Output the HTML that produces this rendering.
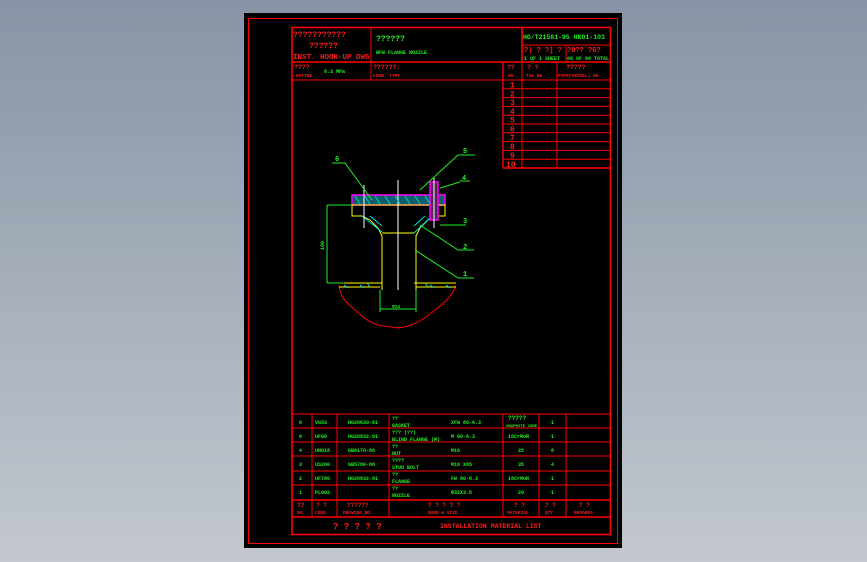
<!DOCTYPE html>
<html><head><style>
html,body{margin:0;padding:0;width:867px;height:562px;overflow:hidden;background:linear-gradient(#8794a5,#c3c8cf);}
svg{position:absolute;left:0;top:0}
text{font-family:"Liberation Mono",monospace;font-weight:bold}
.r{fill:#ff1a1a}.g{fill:#22ee22}
</style></head><body>
<svg width="867" height="562" viewBox="0 0 867 562">
<rect x="244" y="13" width="378" height="535" fill="#000"/>
<g stroke="#ff0000" fill="none" stroke-width="1">
<rect x="248.5" y="18.5" width="369" height="525"/>
<rect x="292" y="27.5" width="318.5" height="507" stroke-width="1.6"/>
<line x1="292" y1="62" x2="611" y2="62" stroke-width="1.6"/>
<line x1="292" y1="80" x2="611" y2="80"/>
<line x1="371" y1="27" x2="371" y2="80"/>
<line x1="522" y1="27" x2="522" y2="62" stroke-width="1.6"/>
<line x1="522" y1="45" x2="611" y2="45"/>
<line x1="566" y1="45" x2="566" y2="62"/>
<line x1="503" y1="62" x2="503" y2="168" stroke-width="1.4"/>
<line x1="522" y1="62" x2="522" y2="168"/>
<line x1="557" y1="62" x2="557" y2="168"/>
<line x1="503" y1="168" x2="611" y2="168" stroke-width="1.4"/>
<path d="M503 88.8H611M503 97.6H611M503 106.4H611M503 115.2H611M503 124H611M503 132.8H611M503 141.6H611M503 150.4H611M503 159.2H611"/>
<path d="M292 414H611M292 428H611M292 442H611M292 456H611M292 471H611M292 485H611"/>
<line x1="292" y1="500" x2="611" y2="500" stroke-width="1.6"/>
<line x1="292" y1="517" x2="611" y2="517" stroke-width="1.6"/>
<path d="M312 414V517M337 414V517M389 414V517M503 414V517M539 414V517M566 414V517"/>
</g>
<!-- header text -->
<text x="293" y="37" class="r" font-size="8">???????????</text>
<text x="309" y="48" class="r" font-size="8">??????</text>
<text x="293" y="59" class="r" font-size="7.5">INST. HOOK-UP DWG</text>
<text x="376" y="41" class="g" font-size="8">??????</text>
<text x="376" y="54" class="g" font-size="5">WFW FLANGE NOZZLE</text>
<text x="523" y="39" class="g" font-size="6.5">HG/T21581-95 HK01-103</text>
<text x="524" y="52" class="r" font-size="7">?| ? ?] ?</text>
<text x="524" y="60" class="g" font-size="5">1 OF 1 SHEET</text>
<text x="567" y="52" class="r" font-size="7">?9?? ?6?</text>
<text x="567" y="60" class="g" font-size="5">06 OF 98 TOTAL</text>
<text x="294" y="69" class="r" font-size="6.5">????</text>
<text x="296" y="77" class="r" font-size="4.5">RATING</text>
<text x="324" y="73" class="g" font-size="5">6.3 MPa</text>
<text x="373" y="69" class="r" font-size="6.5">??????:</text>
<text x="373" y="77" class="r" font-size="4.5">CONN. TYPE</text>
<text x="507" y="69" class="r" font-size="6.5">??</text>
<text x="508" y="77" class="r" font-size="4.5">NO.</text>
<text x="527" y="69" class="r" font-size="6.5">? ?</text>
<text x="526" y="77" class="r" font-size="4.5">TAG NO</text>
<text x="566" y="69" class="r" font-size="6.5">?????</text>
<text x="558" y="77" class="r" font-size="4.5">PIPE(VESSEL) NO.</text>
<g class="r" font-size="8">
<text x="510" y="87.5">1</text><text x="510" y="96.3">2</text><text x="510" y="105">3</text><text x="510" y="114">4</text><text x="510" y="122.7">5</text><text x="510" y="131.5">6</text><text x="510" y="140.3">7</text><text x="510" y="149">8</text><text x="510" y="158">9</text><text x="506" y="167">10</text>
</g>
<!-- drawing -->
<g fill="none">
<path d="M339 285 C340 300 350 305 362 316 C375 328 390 326 398 328 C410 327 420 322 430 314 C445 303 453 295 456 285" stroke="#ff0000"/>
<rect x="352" y="195" width="93" height="10" fill="#0e5f6b" stroke="#ff00ff" stroke-width="1.5"/>
<path d="M352 205H445V216H433 L428 220 420 228 416 236V290 M352 205V216H362 L370 220 378 228 382 236V290" stroke="#ffff00"/>
<path d="M362 216 L382 232 M370 216 L382 226 M425 216 L414 226 M432 216 L414 233" stroke="#00dddd"/>
<path d="M382 233H414" stroke="#ffff00"/>
<path d="M339 283H382M414 283H456M339 287H380M416 287H456" stroke="#ffff00"/>
<path d="M344 285l4 3M360 285l4 3M430 285l4 3M446 285l4 3M367 283l3 4M425 283l3 4" stroke="#00dddd"/>
<rect x="430" y="182" width="8" height="38" fill="#552255" stroke="#ff00ff" stroke-width="1.5"/>
<path d="M398 180V290M434 178V228M364 185V228" stroke="#fff"/>
<path d="M355 196l5 8M365 196l5 8M375 196l5 8M385 196l5 8M395 196l5 8M405 196l5 8M415 196l5 8M425 196l5 8" stroke="#00cccc"/>
<g stroke="#22ee22">
<path d="M327 205H352M327 283H344M327 205V283"/>
<path d="M380 290V312M416 290V312M380 309H416"/>
<path d="M332 163H345L372 200M458 155H475M458 155L420 190M460 181H470M460 182L440 188M440 225H466M420 225L458 250H474M415 250L458 278H474"/>
</g>
</g>
<g class="g" font-size="7">
<text x="335" y="161">6</text><text x="463" y="153">5</text><text x="462" y="180">4</text><text x="463" y="223">3</text><text x="463" y="249">2</text><text x="463" y="276">1</text>
</g>
<text x="324" y="250" class="g" font-size="5" transform="rotate(-90 324 250)">180</text>
<text x="392" y="308" class="g" font-size="4.5">Φ24</text>
<!-- material table -->
<g class="g" font-size="5">
<text x="299" y="424">6</text><text x="315" y="424">VG5S</text><text x="348" y="424">HG20630-91</text><text x="392" y="420">??</text><text x="392" y="427">GASKET</text><text x="451" y="424">XFW 80-6.3</text><text x="508" y="420" font-size="6">?????</text><text x="506" y="427" font-size="4">GRAPHITE COMP.</text><text x="551" y="424">1</text>
<text x="299" y="438">6</text><text x="315" y="438">UFG6</text><text x="348" y="438">HG20632-91</text><text x="392" y="434">??? (??)</text><text x="392" y="441">BLIND FLANGE (M)</text><text x="451" y="438">M 80-6.3</text><text x="508" y="438">16CrMoR</text><text x="551" y="438">1</text>
<text x="299" y="452">4</text><text x="315" y="452">UN018</text><text x="348" y="452">GB6170-86</text><text x="392" y="448">??</text><text x="392" y="455">NUT</text><text x="451" y="452">M16</text><text x="518" y="452">25</text><text x="551" y="452">8</text>
<text x="299" y="466">3</text><text x="315" y="466">US200</text><text x="348" y="466">GB5780-86</text><text x="392" y="462">????</text><text x="392" y="469">STUD BOLT</text><text x="451" y="466">M16 X85</text><text x="518" y="466">35</text><text x="551" y="466">4</text>
<text x="299" y="480">2</text><text x="315" y="480">UF780</text><text x="348" y="480">HG20632-91</text><text x="392" y="476">??</text><text x="392" y="483">FLANGE</text><text x="451" y="480">FW 80-6.3</text><text x="508" y="480">16CrMoR</text><text x="551" y="480">1</text>
<text x="299" y="494">1</text><text x="315" y="494">PL002</text><text x="392" y="490">??</text><text x="392" y="497">NOZZLE</text><text x="451" y="494">Φ32X3.5</text><text x="518" y="494">20</text><text x="551" y="494">1</text>
</g>
<g class="r" font-size="6">
<text x="297" y="507">??</text><text x="316" y="507">? ?</text><text x="347" y="507">??????</text><text x="428" y="507">? ? ? ? ?</text><text x="514" y="507">? ?</text><text x="545" y="507">? ?</text><text x="579" y="507">? ?</text>
</g>
<g class="r" font-size="4.5">
<text x="297" y="514">NO</text><text x="315" y="514">CODE</text><text x="343" y="514">DRAWING NO.</text><text x="428" y="514">NAME &amp; SIZE</text><text x="507" y="514">MATERIAL</text><text x="545" y="514">QTY</text><text x="574" y="514">REMARKS</text>
</g>
<text x="333" y="529" class="r" font-size="9">? ? ? ? ?</text>
<text x="440" y="528" class="r" font-size="6.5">INSTALLATION MATERIAL LIST</text>
</svg>
</body></html>
